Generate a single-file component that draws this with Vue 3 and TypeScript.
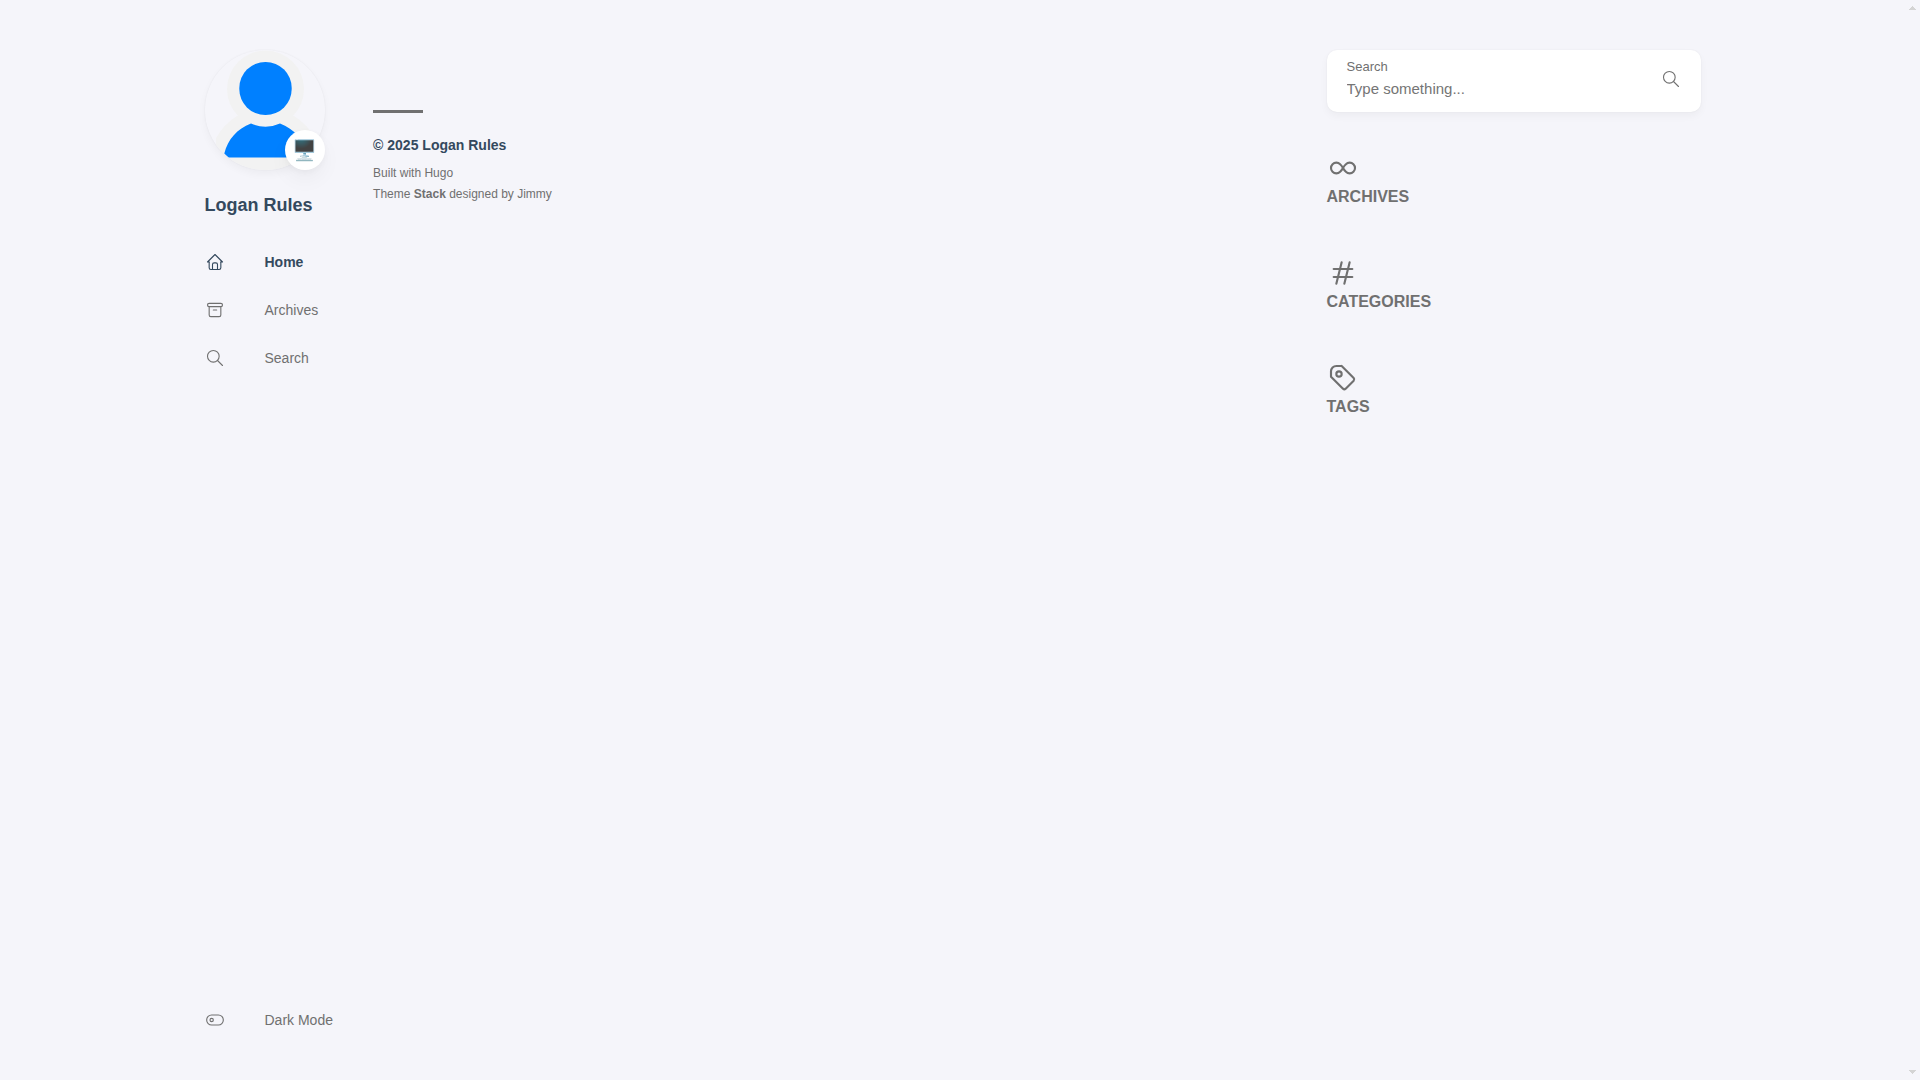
<script setup lang="ts">
import { ref } from 'vue'

interface MenuItem {
  label: string
  href: string
  paths: string[]
  active?: boolean
}

interface Widget {
  title: string
  paths: string[]
}

const searchIcon: string[] = ['M3 10a7 7 0 1 0 14 0a7 7 0 1 0 -14 0', 'M21 21l-6 -6']

const menu: MenuItem[] = [
  {
    label: 'Home',
    href: '#home',
    active: true,
    paths: [
      'M5 12H3l9 -9l9 9h-2',
      'M5 12v7a2 2 0 0 0 2 2h10a2 2 0 0 0 2 -2v-7',
      'M9 21v-6a2 2 0 0 1 2 -2h2a2 2 0 0 1 2 2v6',
    ],
  },
  {
    label: 'Archives',
    href: '#archives',
    paths: [
      'M5 4h14a2 2 0 0 1 0 4h-14a2 2 0 0 1 0 -4',
      'M5 8v10a2 2 0 0 0 2 2h10a2 2 0 0 0 2 -2v-10',
      'M10 12h4',
    ],
  },
  { label: 'Search', href: '#search', paths: searchIcon },
]

const widgets: Widget[] = [
  {
    title: 'Archives',
    paths: [
      'M9.828 9.172a4 4 0 1 0 0 5.656a10 10 0 0 0 2.172 -2.828a10 10 0 0 1 2.172 -2.828a4 4 0 1 1 0 5.656a10 10 0 0 1 -2.172 -2.828a10 10 0 0 0 -2.172 -2.828',
    ],
  },
  { title: 'Categories', paths: ['M5 9h14', 'M5 15h14', 'M11 4l-4 16', 'M17 4l-4 16'] },
  {
    title: 'Tags',
    paths: [
      'M11 3l9 9a1.5 1.5 0 0 1 0 2l-6 6a1.5 1.5 0 0 1 -2 0l-9 -9v-4a4 4 0 0 1 4 -4h4',
      'M7 9a2 2 0 1 0 4 0a2 2 0 1 0 -4 0',
    ],
  },
]

const keyword = ref('')
</script>

<template>
  <div class="page">
    <div class="container">
      <aside class="left-sidebar">
        <header class="site-info">
          <figure class="site-avatar">
            <a href="#home" aria-label="Logan Rules">
              <svg class="avatar" viewBox="0 0 120 120" aria-hidden="true">
                <circle cx="60.5" cy="39" r="38.5" fill="#f2f2f2" />
                <path d="M32 66Q19 74 11 88L11 120H110V88Q102 74 89 66Z" fill="#f2f2f2" />
                <rect x="34.300" y="12" width="52.400" height="53" rx="26" fill="#0080ff" />
                <path
                  d="M46 73.500Q60.500 80 75 73.500C89 79 98 89 101.500 103.500L97 107.500H23.500L19.300 103.500C23 89 32 79 46 73.500Z"
                  fill="#0080ff"
                />
              </svg>
            </a>
            <span class="emoji">🖥️</span>
          </figure>
          <h1 class="site-name"><a href="#home">Logan Rules</a></h1>
        </header>
        <nav class="menu">
          <ol>
            <li v-for="item in menu" :key="item.label">
              <a :href="item.href" class="menu-item" :class="{ current: item.active }">
                <svg class="icon" viewBox="0 0 24 24" aria-hidden="true">
                  <path v-for="d in item.paths" :key="d" :d="d" />
                </svg>
                <span>{{ item.label }}</span>
              </a>
            </li>
          </ol>
          <button type="button" class="menu-item">
            <svg class="icon" viewBox="0 0 24 24" aria-hidden="true">
              <circle cx="8" cy="12" r="2" />
              <rect x="2" y="6" width="20" height="12" rx="6" />
            </svg>
            <span>Dark Mode</span>
          </button>
        </nav>
      </aside>

      <main class="main">
        <footer class="site-footer">
          <section class="copyright">© 2025 Logan Rules</section>
          <section class="powerby">
            Built with <a href="#hugo">Hugo</a><br />
            Theme <b><a href="#stack">Stack</a></b> designed by <a href="#jimmy">Jimmy</a>
          </section>
        </footer>
      </main>

      <aside class="right-sidebar">
        <form class="search-form" @submit.prevent>
          <div class="search-field">
            <label for="keyword">Search</label>
            <input id="keyword" v-model="keyword" type="text" placeholder="Type something..." />
          </div>
          <button type="submit" aria-label="Search">
            <svg class="icon" viewBox="0 0 24 24" aria-hidden="true">
              <path v-for="d in searchIcon" :key="d" :d="d" />
            </svg>
          </button>
        </form>
        <section v-for="widget in widgets" :key="widget.title" class="widget">
          <svg class="widget-icon" viewBox="0 0 24 24" aria-hidden="true">
            <path v-for="d in widget.paths" :key="d" :d="d" />
          </svg>
          <h2>{{ widget.title }}</h2>
        </section>
      </aside>
    </div>
    <div class="scroll-gutter" aria-hidden="true">
      <svg viewBox="0 0 7 4" shape-rendering="crispEdges"><path d="M3 0h1v1h1v1h1v1h1v1H0V3h1V2h1V1h1z" /></svg>
      <svg viewBox="0 0 7 4" shape-rendering="crispEdges"><path d="M0 0h7v1H6v1H5v1H4v1H3V3H2V2H1V1H0z" /></svg>
    </div>
  </div>
</template>

<style>
html {
  background: #f5f5fa;
}
body {
  margin: 0;
}
</style>

<style scoped>
.page {
  display: flex;
  align-items: flex-start;
  color: #707070;
  font-family: "Liberation Sans", Arial, sans-serif;
  font-size: 14px;
}
.container {
  display: flex;
  flex: 1;
  align-items: flex-start;
  gap: 19px;
  box-sizing: border-box;
  min-width: 0;
  max-width: 1536px;
  margin: 0 auto;
  padding: 0 20px;
}
.scroll-gutter {
  position: sticky;
  top: 0;
  display: flex;
  flex: 0 0 15px;
  flex-direction: column;
  align-items: center;
  justify-content: space-between;
  box-sizing: border-box;
  height: 100vh;
  padding: 6px 0;
}
.scroll-gutter svg {
  width: 7px;
  height: 4px;
  fill: #d4d4d4;
}
a {
  color: inherit;
  text-decoration: none;
}
button {
  padding: 0;
  border: 0;
  background: none;
  color: inherit;
  font: inherit;
  cursor: pointer;
}
.left-sidebar {
  position: sticky;
  top: 0;
  display: flex;
  flex: 0 0 10%;
  flex-direction: column;
  gap: 24px;
  box-sizing: border-box;
  height: 100vh;
  padding: 50px 0 38px;
}
.site-info {
  display: flex;
  flex-direction: column;
  gap: 24px;
}
.site-avatar {
  position: relative;
  width: 120px;
  height: 120px;
  margin: 0;
}
.avatar {
  display: block;
  width: 120px;
  height: 120px;
  border-radius: 50%;
  box-shadow: 0 4px 8px rgba(0, 0, 0, 0.04), 0 0 2px rgba(0, 0, 0, 0.06);
}
.emoji {
  position: absolute;
  right: 0;
  bottom: 0;
  width: 40px;
  height: 40px;
  border-radius: 50%;
  background: #fff;
  box-shadow: 0 10px 20px rgba(0, 0, 0, 0.04), 0 2px 6px rgba(0, 0, 0, 0.04);
  font-family: "Liberation Sans", "Noto Color Emoji", sans-serif;
  font-size: 20px;
  line-height: 40px;
  text-align: center;
}
.site-name {
  margin: 0;
  color: #34495e;
  font-size: 18px;
  font-weight: 700;
  line-height: 22px;
}
.menu {
  display: flex;
  flex: 1;
  flex-direction: column;
  justify-content: space-between;
}
.menu ol {
  margin: 0;
  padding: 0;
  list-style: none;
}
.menu-item {
  display: flex;
  align-items: center;
  gap: 40px;
  height: 44px;
  white-space: nowrap;
}
.menu li {
  margin-bottom: 4px;
}
.menu-item.current {
  color: #34495e;
  font-weight: 700;
}
.icon,
.widget-icon {
  display: block;
  flex: none;
  width: 20px;
  height: 20px;
  fill: none;
  stroke: currentColor;
  stroke-width: 1.33;
  stroke-linecap: round;
  stroke-linejoin: round;
}
.widget-icon {
  width: 32px;
  height: 32px;
  stroke-width: 1.6;
}
.main {
  flex: 1;
  min-width: 0;
  padding-top: 110px;
}
.site-footer::before {
  content: "";
  display: block;
  width: 50px;
  height: 3px;
  margin-bottom: 20px;
  background: #707070;
}
.copyright {
  margin-bottom: 6px;
  color: #34495e;
  font-weight: 700;
  line-height: 24px;
}
.powerby {
  font-size: 12px;
  line-height: 21px;
}
.right-sidebar {
  display: flex;
  flex: 0 0 25%;
  flex-direction: column;
  gap: 40px;
  padding-top: 50px;
}
.search-form {
  display: flex;
  align-items: center;
  padding: 7px 20px 12px;
  border-radius: 10px;
  background: #fff;
  box-shadow: 0 4px 8px rgba(0, 0, 0, 0.04), 0 0 2px rgba(0, 0, 0, 0.06);
}
.search-field {
  display: flex;
  flex: 1;
  flex-direction: column;
  gap: 1px;
  min-width: 0;
}
.search-field label {
  font-size: 13px;
  line-height: 20px;
}
.search-field input {
  width: 100%;
  height: 22px;
  padding: 0;
  border: 0;
  outline: 0;
  background: none;
  color: #34495e;
  font: 15px/22px "Liberation Sans", Arial, sans-serif;
}
.search-field input::placeholder {
  color: #757575;
  opacity: 1;
}
.widget {
  display: flex;
  flex-direction: column;
  gap: 2px;
  padding-bottom: 10px;
}
.widget h2 {
  margin: 0;
  font-size: 16px;
  font-weight: 700;
  line-height: 21px;
  text-transform: uppercase;
}
</style>
